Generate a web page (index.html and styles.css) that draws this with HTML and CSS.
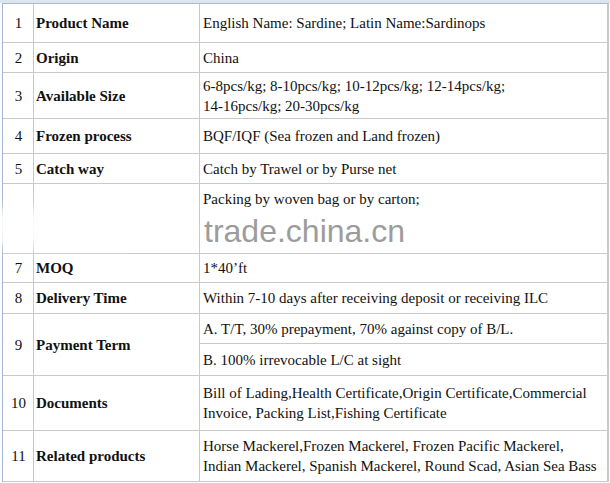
FILE: index.html
```html
<!DOCTYPE html>
<html>
<head>
<meta charset="utf-8">
<link rel="stylesheet" href="styles.css">
</head>
<body>
<div class="page">
  <div class="sheet">
    <div class="num">1</div><div class="label">Product Name</div><div class="val">English Name: Sardine; Latin Name:Sardinops</div>
    <div class="num">2</div><div class="label">Origin</div><div class="val">China</div>
    <div class="num">3</div><div class="label">Available Size</div><div class="val">6-8pcs/kg; 8-10pcs/kg; 10-12pcs/kg; 12-14pcs/kg;<br>14-16pcs/kg; 20-30pcs/kg</div>
    <div class="num">4</div><div class="label">Frozen process</div><div class="val">BQF/IQF (Sea frozen and Land frozen)</div>
    <div class="num">5</div><div class="label">Catch way</div><div class="val">Catch by Trawel or by Purse net</div>
    <div class="num"></div><div class="label"></div><div class="val top">Packing by woven bag or by carton;</div>
    <div class="num">7</div><div class="label">MOQ</div><div class="val">1*40’ft</div>
    <div class="num">8</div><div class="label">Delivery Time</div><div class="val">Within 7-10 days after receiving deposit or receiving ILC</div>
    <div class="num span2">9</div><div class="label span2">Payment Term</div><div class="val">A. T/T, 30% prepayment, 70% against copy of B/L.</div>
    <div class="val">B. 100% irrevocable L/C at sight</div>
    <div class="num">10</div><div class="label">Documents</div><div class="val">Bill of Lading,Health Certificate,Origin Certificate,Commercial<br>Invoice, Packing List,Fishing Certificate</div>
    <div class="num">11</div><div class="label">Related products</div><div class="val">Horse Mackerel,Frozen Mackerel, Frozen Pacific Mackerel,<br>Indian Mackerel, Spanish Mackerel, Round Scad, Asian Sea Bass</div>
  </div>
  <div class="glow"></div>
  <div class="watermark">trade.china.cn</div>
</div>
</body>
</html>
```
FILE: styles.css
```css
html, body {
  margin: 0;
  padding: 0;
  background: #ffffff;
}
.page {
  position: relative;
  width: 610px;
  height: 483px;
  overflow: hidden;
  background: linear-gradient(#dbe5ef 0, #dbe5ef 3px, #ffffff 3px);
}
.sheet {
  margin: 3px 0 0 2px;
  width: 605px;
  display: grid;
  grid-template-columns: 30px 165px 407px;
  grid-template-rows: 38px 29px 45px 34px 29px 69px 28px 30px 29px 31px 54px 50px;
  gap: 1px;
  padding: 0 1px 1px 0;
  background: #c9c9c9;
  border-top: 1px solid #a9bbd0;
  border-left: 1px solid #a3b8d2;
  font-family: "Liberation Serif", "Times New Roman", serif;
  font-size: 15px;
  line-height: 20px;
  color: #111111;
}
.sheet > div {
  background: #ffffff;
  display: flex;
  align-items: center;
  white-space: nowrap;
}
.num {
  justify-content: center;
  padding-left: 1px;
}
.label {
  font-weight: bold;
  padding-left: 2px;
}
.val {
  padding-left: 3px;
}
.val.top {
  align-items: flex-start;
  padding-top: 5px;
}
.span2 {
  grid-row: span 2;
}
.glow {
  position: absolute;
  left: -10px;
  top: 208px;
  width: 135px;
  height: 38px;
  background: rgba(255, 255, 255, 0.9);
  filter: blur(6px);
}
.watermark {
  position: absolute;
  left: 204px;
  top: 215px;
  font-family: "Liberation Sans", Arial, sans-serif;
  font-size: 32px;
  line-height: 32px;
  color: #9c9c9c;
  text-shadow: 0 0 6px #ffffff;
}
```
